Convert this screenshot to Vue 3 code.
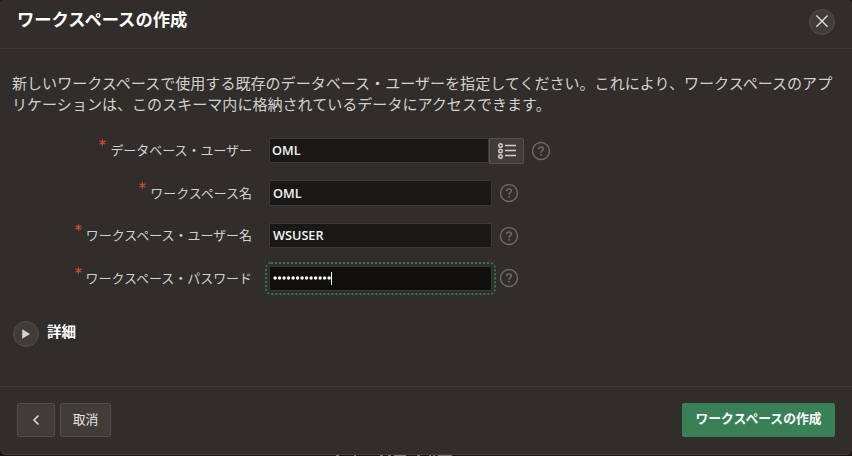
<script setup>
import { ref } from 'vue'

const fields = ref([
  { id: 'dbuser', label: 'データベース・ユーザー', value: 'OML', list: true },
  { id: 'name', label: 'ワークスペース名', value: 'OML' },
  { id: 'wsuser', label: 'ワークスペース・ユーザー名', value: 'WSUSER' },
  { id: 'password', label: 'ワークスペース・パスワード', dots: 13 },
])
</script>

<template>
  <div class="page">
    <section class="dialog">
      <header class="head">
        <h1>ワークスペースの作成</h1>
        <button class="round close" aria-label="閉じる">
          <svg width="24" height="24" viewBox="0 0 24 24"><path d="M6.4 5.6 17.6 16.8M17.6 5.6 6.4 16.8" fill="none" stroke="#dddbd8" stroke-width="1.4" /></svg>
        </button>
      </header>
      <main class="body">
        <p class="intro">新しいワークスペースで使用する既存のデータベース・ユーザーを指定してください。これにより、ワークスペースのアプ<br>リケーションは、このスキーマ内に格納されているデータにアクセスできます。</p>
        <div class="form">
          <div v-for="f in fields" :key="f.id" class="row">
            <div class="label"><span class="star"><svg width="7" height="7" viewBox="0 0 7 7"><path d="M3.5 0.3V6.7M0.6 1.9 6.4 5.1M6.4 1.9 0.6 5.1" stroke="#c5452f" stroke-width="1.25" /></svg></span><span>{{ f.label }}</span></div>
            <div class="input" :class="{ narrow: f.list, focus: f.dots }">
              <span v-if="f.value" class="value">{{ f.value }}</span>
              <template v-else>
                <svg class="dots" width="58" height="6" viewBox="0 0 58 6"><circle v-for="n in f.dots" :key="n" :cx="n * 4.5 - 2.4" cy="3" r="1.7" fill="#fff" /></svg>
                <i class="caret"></i>
              </template>
            </div>
            <button v-if="f.list" class="lov" aria-label="一覧">
              <svg width="20" height="16" viewBox="0 0 20 16">
                <g fill="none" stroke="#d3d0cc" stroke-width="1.4">
                  <circle cx="3.5" cy="2.5" r="1.8" /><circle cx="3.5" cy="8" r="1.8" /><circle cx="3.5" cy="13.5" r="1.8" />
                  <path d="M8 2.5H19M8 7.5H19M8 12.5H19" />
                </g>
              </svg>
            </button>
            <svg class="help" width="20" height="20" viewBox="0 0 20 20">
              <circle cx="10" cy="10" r="8.5" fill="none" stroke="#6b6762" stroke-width="1.5" />
              <path d="M7.6 8.2C7.6 5.2 12.5 5.3 12.4 8C12.3 9.7 10 9.7 10 11.8" fill="none" stroke="#6b6762" stroke-width="1.6" />
              <rect x="9.2" y="13" width="1.7" height="1.7" fill="#6b6762" />
            </svg>
          </div>
        </div>
        <div class="details">
          <span class="round"><svg width="10" height="10" viewBox="0 0 10 10"><path d="M1.2 0.2 9 5 1.2 9.8Z" fill="#d5d3d0" /></svg></span>
          <strong>詳細</strong>
        </div>
      </main>
      <footer class="foot">
        <button class="btn back" aria-label="戻る"><svg width="8" height="12" viewBox="0 0 8 12"><path d="M6.5 1.5 2 6 6.5 10.5" fill="none" stroke="#dddbd8" stroke-width="1.6" /></svg></button>
        <button class="btn cancel">取消</button>
        <button class="btn primary">ワークスペースの作成</button>
      </footer>
    </section>
    <svg class="behind" width="852" height="1" viewBox="0 0 852 1"><path d="M336 .5h3M354 .5h2M380 .5h3M388 .5h3M394 .5h12M417 .5h3M429 .5h2M433 .5h2M438 .5h14" stroke="#77716f" /></svg>
  </div>
</template>

<style>
body { margin: 0; background: #181313; }
</style>

<style scoped>
.page {
  width: 852px;
  height: 456px;
  overflow: hidden;
  background: #181313;
  font-family: "Open Sans", "Noto Sans CJK JP", sans-serif;
  color: #d3d1ce;
}
.page * { box-sizing: border-box; }
button { padding: 0; font: inherit; color: inherit; }
svg { display: block; flex: none; }
.dialog {
  display: flex;
  flex-direction: column;
  height: 455px;
  background: #312d2a;
  border-bottom: 1px solid #423e3a;
  border-radius: 3px 3px 6px 6px;
}
.head {
  height: 49px;
  flex: none;
  display: flex;
  justify-content: space-between;
  padding: 0 17px;
  border-bottom: 1px solid #3c3835;
}
h1 {
  margin: 7px 0 0;
  font-size: 17.3px;
  line-height: 26px;
  font-weight: 700;
  color: #fff;
}
.round {
  width: 26px;
  height: 26px;
  display: flex;
  align-items: center;
  justify-content: center;
  border: 1px solid #534f4a;
  border-radius: 50%;
  background: #403c38;
}
.close { margin-top: 9px; }
.body { flex: 1; padding: 24px 12px 0 13px; }
.intro {
  margin: 0 0 0 -1px;
  font-size: 15.05px;
  line-height: 21px;
  white-space: nowrap;
}
.form { margin-top: 23px; display: grid; gap: 17.6px; }
.row { display: flex; align-items: center; height: 25px; }
.label {
  width: 239px;
  margin-right: 17px;
  display: flex;
  justify-content: flex-end;
  font-size: 12.96px;
  line-height: 23px;
  white-space: nowrap;
}
.star { padding: 0 4px 0 0; }
.input {
  width: 223px;
  height: 25.5px;
  display: flex;
  align-items: center;
  padding-left: 3px;
  border: 1px solid #3c3935;
  border-radius: 2px;
  background: #191816;
}
.narrow { width: 220px; padding-left: 2px; border-radius: 2px 0 0 2px; }
.focus { background: #100f0d; outline: 2px dotted #2d7a50; outline-offset: 2px; }
.value { font-size: 12.7px; font-weight: 600; line-height: 22px; margin-bottom: 1px; color: #f5f4f2; }
.caret { width: 1px; height: 13px; background: #fff; }
.lov {
  width: 35px;
  height: 26px;
  display: flex;
  align-items: center;
  justify-content: center;
  border: 1px solid #55514b;
  border-radius: 0 2px 2px 0;
  background: #403c37;
}
.help { margin-left: 7px; }
.details { display: flex; align-items: center; gap: 8px; margin-top: 30px; }
.details strong { font-size: 14.5px; line-height: 22px; color: #fff; margin-top: -4px; }
.foot {
  height: 68px;
  flex: none;
  display: flex;
  gap: 5px;
  padding: 16px 17px 0;
  border-top: 1px solid #3c3835;
}
.btn {
  height: 34px;
  display: flex;
  align-items: center;
  justify-content: center;
  border: 1px solid #504c46;
  border-radius: 2px;
  background: #403c37;
  font-size: 12.8px;
  line-height: 28px;
}
.back { width: 38px; }
.cancel { width: 51px; color: #e5e3e0; padding-bottom: 3px; }
.primary {
  width: 153px;
  margin-left: auto;
  border-color: #398057;
  background: #398057;
  padding-bottom: 4px;
  font-weight: 700;
  color: #fff;
}
</style>
